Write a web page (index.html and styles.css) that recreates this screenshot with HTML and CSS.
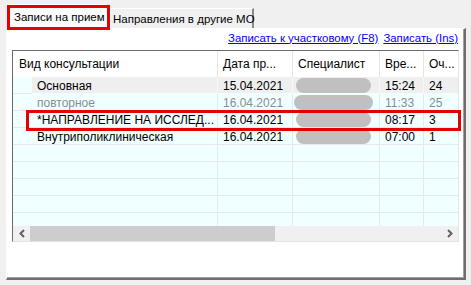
FILE: index.html
```html
<!DOCTYPE html>
<html lang="ru">
<head>
<meta charset="utf-8">
<link rel="stylesheet" href="styles.css">
</head>
<body>
<div class="tabs">
  <div class="tab tab-active">Записи на прием</div>
  <div class="tab tab-idle">Направления в другие МО</div>
</div>
<div class="page">
  <div class="links">
    <a class="link">Записать к участковому (F8)</a>
    <a class="link">Записать (Ins)</a>
  </div>
  <div class="grid">
    <div class="table">
      <div class="hcell hcell-first">Вид консультации</div>
      <div class="hcell">Дата пр...</div>
      <div class="hcell">Специалист</div>
      <div class="hcell">Вре...</div>
      <div class="hcell hcell-last">Оч...</div>

      <div class="cell indent"></div>
      <div class="cell sel">Основная</div>
      <div class="cell sel">15.04.2021</div>
      <div class="cell sel spec">.<span class="blur"></span></div>
      <div class="cell sel">15:24</div>
      <div class="cell sel last">24</div>

      <div class="cell indent"></div>
      <div class="cell dim">повторное</div>
      <div class="cell dim">16.04.2021</div>
      <div class="cell dim spec"><span class="blur blur-wide"></span></div>
      <div class="cell dim">11:33</div>
      <div class="cell dim last">25</div>

      <div class="cell indent"></div>
      <div class="cell">*НАПРАВЛЕНИЕ НА ИССЛЕД...</div>
      <div class="cell">16.04.2021</div>
      <div class="cell spec"><span class="blur"></span></div>
      <div class="cell">08:17</div>
      <div class="cell last">3</div>

      <div class="cell indent"></div>
      <div class="cell">Внутриполиклиническая</div>
      <div class="cell">16.04.2021</div>
      <div class="cell spec"><span class="blur"></span></div>
      <div class="cell">07:00</div>
      <div class="cell last">1</div>

      <div class="cell indent"></div><div class="cell"></div><div class="cell"></div><div class="cell"></div><div class="cell"></div><div class="cell last"></div>
      <div class="cell indent"></div><div class="cell"></div><div class="cell"></div><div class="cell"></div><div class="cell"></div><div class="cell last"></div>
      <div class="cell indent"></div><div class="cell"></div><div class="cell"></div><div class="cell"></div><div class="cell"></div><div class="cell last"></div>
      <div class="cell indent"></div><div class="cell"></div><div class="cell"></div><div class="cell"></div><div class="cell"></div><div class="cell last"></div>
      <div class="cell indent"></div><div class="cell"></div><div class="cell"></div><div class="cell"></div><div class="cell"></div><div class="cell last"></div>
      <div class="cell indent"></div><div class="cell"></div><div class="cell"></div><div class="cell"></div><div class="cell"></div><div class="cell last"></div>
      <div class="cell indent"></div><div class="cell"></div><div class="cell"></div><div class="cell"></div><div class="cell"></div><div class="cell last"></div>
    </div>
    <div class="hscroll">
      <div class="sbtn"><svg width="8" height="9" viewBox="0 0 8 9"><polyline points="6,1 2.5,4.5 6,8" fill="none" stroke="#606060" stroke-width="2"/></svg></div>
      <div class="thumb"></div>
      <div class="track"></div>
      <div class="sbtn"><svg width="8" height="9" viewBox="0 0 8 9"><polyline points="2,1 5.5,4.5 2,8" fill="none" stroke="#606060" stroke-width="2"/></svg></div>
    </div>
  </div>
</div>
<div class="mark mark-tab"></div>
<div class="mark mark-row"></div>
</body>
</html>
```
FILE: styles.css
```css
html, body {
  margin: 0;
  padding: 0;
}
body {
  width: 471px;
  height: 285px;
  overflow: hidden;
  position: relative;
  background: #f0f0f0;
  font-family: "Liberation Sans", Arial, sans-serif;
  font-size: 12px;
  color: #000;
}
.tabs {
  display: flex;
  align-items: flex-end;
  height: 24px;
  padding: 4px 0 0 8px;
  font-size: 11.5px;
}
.tab {
  box-sizing: border-box;
  display: flex;
  align-items: center;
  white-space: nowrap;
  border-left: 1px solid #ffffff;
  border-top: 1px solid #ffffff;
}
.tab-active {
  width: 100px;
  height: 25px;
  margin-bottom: -1px;
  padding-left: 5px;
  background: #fbfbfb;
  border-right: 1px solid #a0a0a0;
  position: relative;
  z-index: 1;
}
.tab-idle {
  width: 144px;
  height: 20px;
  margin-left: 2px;
  padding-left: 2px;
  padding-top: 1px;
  background: #f0f0f0;
  border-right: 2px solid #8a8a8a;
}
.page {
  box-sizing: border-box;
  margin-left: 6px;
  width: 460px;
  height: 252px;
  background: #ffffff;
  border-left: 1px solid #ffffff;
  border-top: 1px solid #ffffff;
  border-right: 2px solid #6e6e6e;
  border-bottom: 2px solid #6e6e6e;
  box-shadow: inset -1px -1px 0 #a0a0a0;
  padding: 0 5px 0 5px;
}
.links {
  height: 17px;
  margin-bottom: 4px;
  display: flex;
  justify-content: flex-end;
  align-items: center;
  gap: 5px;
  padding-right: 1px;
  font-size: 11.4px;
}
.link {
  color: #0000ff;
  text-decoration: underline;
  white-space: nowrap;
}
.grid {
  width: 447px;
  box-sizing: border-box;
  border-left: 1px solid #6b6b6b;
  border-top: 1px solid #6b6b6b;
  border-right: 1px solid #e3e3e3;
  border-bottom: 1px solid #e3e3e3;
}
.table {
  display: grid;
  grid-template-columns: 19px 186px 75px 87px 44px 34px;
  grid-template-rows: 26px;
  grid-auto-rows: 17px;
  height: 175px;
  overflow: hidden;
  background: #f0ffff;
}
.hcell {
  background: #ffffff;
  border-right: 1px solid #e5e5e5;
  display: flex;
  align-items: center;
  padding-left: 5px;
  white-space: nowrap;
  overflow: hidden;
}
.hcell-first {
  grid-column: span 2;
  padding-left: 6px;
}
.hcell-last {
  border-right: none;
}
.cell {
  box-sizing: border-box;
  border-right: 1px solid #e4eaea;
  border-bottom: 1px solid #e4eaea;
  display: flex;
  align-items: center;
  padding-left: 5px;
  padding-top: 1px;
  white-space: nowrap;
  overflow: hidden;
  position: relative;
}
.cell.indent {
  border-right: none;
  padding: 0;
}
.cell.last {
  border-right: none;
}
.cell.sel {
  background: #efefef;
  border-right-color: #f8f8f8;
  border-bottom-color: #f0ffff;
}
.cell.dim {
  color: #8c8c8c;
}
.cell.spec {
  align-items: flex-end;
  padding-bottom: 1px;
}
.blur {
  position: absolute;
  left: 3px;
  top: 1px;
  width: 75px;
  height: 15px;
  border-radius: 8px;
  background: #c0c0c0;
}
.blur-wide {
  left: 1px;
  width: 79px;
}
.hscroll {
  display: flex;
  height: 15px;
  background: #f0f0f0;
}
.sbtn {
  width: 17px;
  display: flex;
  align-items: center;
  justify-content: center;
}
.thumb {
  width: 245px;
  background: #cdcdcd;
}
.track {
  flex: 1;
}
.mark {
  position: absolute;
  box-sizing: border-box;
  border: 3px solid #e60000;
  z-index: 5;
}
.mark-tab {
  left: 7px;
  top: 5px;
  width: 103px;
  height: 25px;
}
.mark-row {
  left: 26px;
  top: 110px;
  width: 435px;
  height: 21px;
}
```
